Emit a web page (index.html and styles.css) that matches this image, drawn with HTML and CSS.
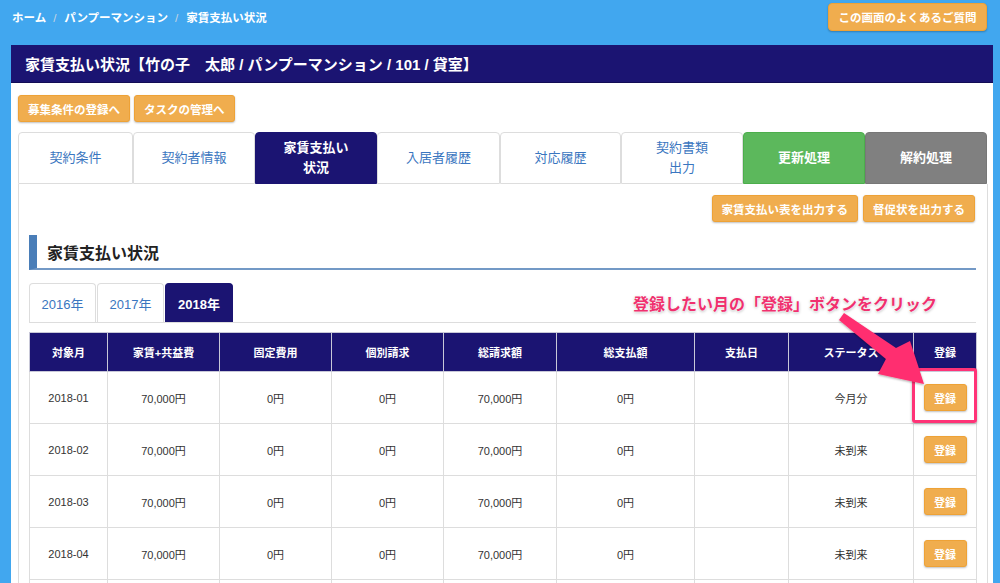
FILE: index.html
```html
<!DOCTYPE html>
<html lang="ja">
<head>
<meta charset="utf-8">
<title>家賃支払い状況</title>
<link rel="stylesheet" href="styles.css">
</head>
<body>
<div class="topbar">
  <div class="crumbs">
    <span>ホーム</span><span class="sep">/</span><span>パンプーマンション</span><span class="sep">/</span><span>家賃支払い状況</span>
  </div>
  <a class="btn btn-faq">この画面のよくあるご質問</a>
</div>

<div class="panel">
  <div class="panel-head">家賃支払い状況【竹の子　太郎 / パンプーマンション / 101 / 貸室】</div>
  <div class="panel-body">
    <div class="btn-row">
      <a class="btn">募集条件の登録へ</a>
      <a class="btn">タスクの管理へ</a>
    </div>
    <div class="tabs">
      <div class="tab">契約条件</div>
      <div class="tab">契約者情報</div>
      <div class="tab active">家賃支払い<br>状況</div>
      <div class="tab">入居者履歴</div>
      <div class="tab">対応履歴</div>
      <div class="tab">契約書類<br>出力</div>
      <div class="tab green">更新処理</div>
      <div class="tab gray">解約処理</div>
    </div>
    <div class="tab-content">
      <div class="out-row">
        <a class="btn">家賃支払い表を出力する</a>
        <a class="btn">督促状を出力する</a>
      </div>
      <h2 class="section-title">家賃支払い状況</h2>
      <div class="year-tabs">
        <div class="ytab">2016年</div>
        <div class="ytab">2017年</div>
        <div class="ytab active">2018年</div>
      </div>
      <table class="pay">
        <colgroup>
          <col class="c1"><col class="c2"><col class="c2"><col class="c2"><col class="c5"><col class="c6"><col class="c7"><col class="c8"><col class="c9">
        </colgroup>
        <thead>
          <tr><th>対象月</th><th>家賃+共益費</th><th>固定費用</th><th>個別請求</th><th>総請求額</th><th>総支払額</th><th>支払日</th><th>ステータス</th><th>登録</th></tr>
        </thead>
        <tbody>
          <tr><td>2018-01</td><td>70,000円</td><td>0円</td><td>0円</td><td>70,000円</td><td>0円</td><td></td><td>今月分</td><td><a class="btn btn-sm">登録</a></td></tr>
          <tr><td>2018-02</td><td>70,000円</td><td>0円</td><td>0円</td><td>70,000円</td><td>0円</td><td></td><td>未到来</td><td><a class="btn btn-sm">登録</a></td></tr>
          <tr><td>2018-03</td><td>70,000円</td><td>0円</td><td>0円</td><td>70,000円</td><td>0円</td><td></td><td>未到来</td><td><a class="btn btn-sm">登録</a></td></tr>
          <tr><td>2018-04</td><td>70,000円</td><td>0円</td><td>0円</td><td>70,000円</td><td>0円</td><td></td><td>未到来</td><td><a class="btn btn-sm">登録</a></td></tr>
          <tr class="next"><td></td><td></td><td></td><td></td><td></td><td></td><td></td><td></td><td></td></tr>
        </tbody>
      </table>

      <div class="note">登録したい月の「登録」ボタンをクリック</div>
      <div class="highlight"></div>
      <svg class="arrow" width="200" height="160" viewBox="800 280 200 160" xmlns="http://www.w3.org/2000/svg">
        <defs>
          <filter id="sh" x="-20%" y="-20%" width="140%" height="140%">
            <feDropShadow dx="0" dy="1" stdDeviation="1.2" flood-color="#000" flood-opacity="0.35"/>
          </filter>
        </defs>
        <polygon filter="url(#sh)" fill="#FF2F6F" points="844,313 839,320 886,359 878,374 924,384 910,341 896,348"/>
      </svg>
    </div>
  </div>
</div>
</body>
</html>
```

FILE: styles.css
```css
html, body {
  margin: 0;
  padding: 0;
  overflow: hidden;
}
body {
  background: #41a7ef;
  font-family: "Liberation Sans", "Noto Sans CJK JP", sans-serif;
  color: #333;
  width: 1000px;
  height: 583px;
}
.topbar {
  display: flex;
  justify-content: space-between;
  align-items: center;
  height: 28px;
  padding: 3px 13px 14px 12px;
}
.crumbs {
  color: #fff;
  font-size: 11.5px;
  font-weight: bold;
  margin-top: -1px;
}
.crumbs .sep {
  color: #c9d6e2;
  padding: 0 8px 0 7px;
  font-weight: normal;
}
.btn {
  display: inline-flex;
  align-items: center;
  justify-content: center;
  box-sizing: border-box;
  height: 27px;
  padding: 0 10px;
  background: #f0ad4e;
  border: 1px solid #eea236;
  border-radius: 3px;
  color: #fff;
  font-size: 11.5px;
  font-weight: bold;
  box-shadow: 0 1px 2px rgba(0,0,0,0.25);
  white-space: nowrap;
}
.btn-faq {
  height: 28px;
  width: 159px;
  padding: 0;
  border-radius: 4px;
}
.panel {
  margin: 0 7px 0 11px;
  background: #fff;
  height: 600px;
}
.panel-head {
  background: #1b1472;
  color: #fff;
  height: 38px;
  box-sizing: border-box;
  border-bottom: 1px solid #120c55;
  padding-left: 14px;
  display: flex;
  align-items: center;
  font-size: 15px;
  font-weight: bold;
}
.panel-body {
  padding: 12px 5px 0 7px;
}
.btn-row {
  display: flex;
  gap: 4px;
}
.btn-row .btn {
  padding: 0 9px;
}
.tabs {
  display: flex;
  margin-top: 10px;
  height: 52px;
}
.tab {
  flex: 0 0 122px;
  box-sizing: border-box;
  border: 1px solid #ddd;
  border-radius: 4px 4px 0 0;
  display: flex;
  align-items: center;
  justify-content: center;
  text-align: center;
  color: #3a76c0;
  font-size: 13px;
  line-height: 20px;
  background: #fff;
}
.tab:first-child { flex-basis: 115px; }
.tab:nth-child(4) { flex-basis: 123px; }
.tab:nth-child(5) { flex-basis: 121px; }
.tab.active {
  background: #1b1472;
  border-color: #1b1472;
  color: #fff;
  font-weight: bold;
}
.tab.green {
  background: #5cb85c;
  border-color: #4cae4c;
  color: #fff;
  font-weight: bold;
}
.tab.gray {
  background: #808080;
  border-color: #777;
  color: #fff;
  font-weight: bold;
}
.tab-content {
  position: relative;
  border: 1px solid #ddd;
  border-top: none;
  padding: 11px 11px 0 10px;
  height: 420px;
}
.out-row {
  display: flex;
  justify-content: flex-end;
  gap: 5px;
  padding-right: 1px;
}
.out-row .btn {
  padding: 0 9px;
}
.section-title {
  margin: 13px 0 0;
  height: 33px;
  border-left: 8px solid #4a7eb8;
  border-bottom: 2px solid #7399c6;
  padding-left: 10px;
  display: flex;
  align-items: center;
  font-size: 16px;
  font-weight: bold;
  color: #222;
  box-sizing: content-box;
}
.year-tabs {
  display: flex;
  margin-top: 13px;
  border-bottom: 1px solid #ddd;
  height: 39px;
}
.ytab {
  box-sizing: border-box;
  width: 67px;
  border: 1px solid #ddd;
  border-bottom: none;
  border-radius: 4px 4px 0 0;
  margin-right: 1px;
  display: flex;
  align-items: center;
  justify-content: center;
  color: #3a76c0;
  font-size: 13px;
}
.ytab.active {
  width: 68px;
  background: #1b1472;
  border-color: #1b1472;
  color: #fff;
  font-weight: bold;
}
table.pay {
  margin-top: 9px;
  border-collapse: collapse;
  table-layout: fixed;
  width: 947px;
  font-size: 11px;
}
col.c1 { width: 78px; }
col.c2 { width: 112px; }
col.c5 { width: 113px; }
col.c6 { width: 138px; }
col.c7 { width: 94px; }
col.c8 { width: 125px; }
col.c9 { width: 63px; }
table.pay th, table.pay td {
  border: 1px solid #ddd;
  text-align: center;
  padding: 0;
}
table.pay th {
  background: #1b1472;
  color: #fff;
  font-weight: bold;
  height: 38px;
  border-color: #c8c8d8;
}
table.pay td {
  height: 51px;
  color: #333;
}
.btn-sm {
  width: 43px;
  height: 27px;
  padding: 0;
  font-size: 11px;
}
.note {
  position: absolute;
  left: 614px;
  top: 112px;
  line-height: 18px;
  font-size: 16px;
  font-weight: bold;
  color: #f0306e;
  white-space: nowrap;
  text-shadow: 0 0 2px #fff, 0 0 2px #fff, 0 1px 3px rgba(0,0,0,0.35);
}
.highlight {
  position: absolute;
  left: 893px;
  top: 184px;
  width: 65px;
  height: 55px;
  box-sizing: border-box;
  border: 3px solid #ff3377;
  border-radius: 3px;
  box-shadow: 0 1px 3px rgba(0,0,0,0.3);
}
.arrow {
  position: absolute;
  left: 781px;
  top: 96px;
}
```
